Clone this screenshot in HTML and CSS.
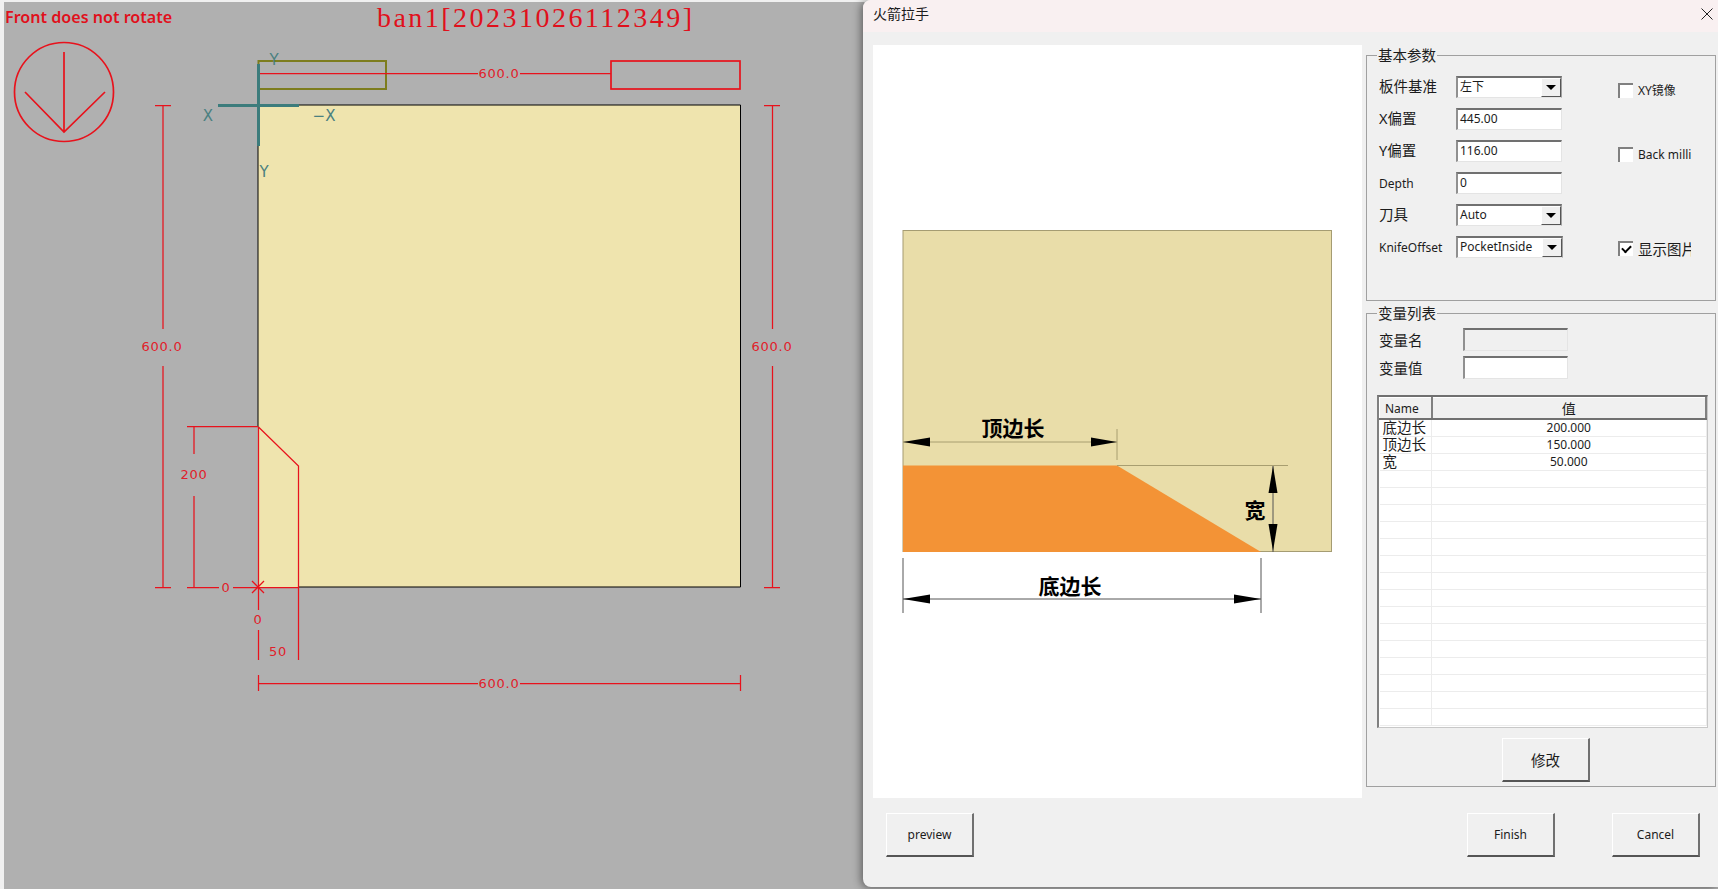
FILE: index.html
```html
<!DOCTYPE html>
<html lang="zh">
<head>
    <meta charset="UTF-8">
    <title>火箭拉手</title>
    <link rel="stylesheet" href="styles.css">
</head>
<body>
    <svg class="lienzo" width="1718" height="889" viewBox="0 0 1718 889">
        <rect class="fondo" x="4" y="2" width="1714" height="887"/>
        <polygon class="tablero" points="258,105 741,105 741,587 258,587"/>
        <polyline class="negro" points="258,427 258,105 740.5,105 740.5,587 298,587"/>
        <text class="aviso" x="5" y="23">Front does not rotate</text>
        <text class="titulo" x="377" y="27">ban1[20231026112349]</text>

        <circle class="rojo2" cx="64" cy="92" r="49.5"/>
        <path class="rojo2" d="M64 52V132M25 92L64 132L105 92"/>

        <rect class="oliva" x="258.5" y="61" width="127.5" height="28"/>
        <rect class="rojo2" x="611" y="61" width="129" height="28"/>
        <path class="rojo" d="M259 73.5H478M520 73.5H611"/>
        <text class="cota" x="499" y="78">600.0</text>

        <path class="rojo" d="M155 105.5H171M163 105.5V329M163 366V587M155 587.5H171"/>
        <text class="cota" x="162" y="351">600.0</text>
        <path class="rojo" d="M764 105.5H780M772.5 105.5V329M772.5 366V587M764 587.5H780"/>
        <text class="cota" x="772" y="351">600.0</text>
        <path class="rojo" d="M258.5 675V691M258.5 683.5H478M520 683.5H741M740.5 675V691"/>
        <text class="cota" x="499" y="688">600.0</text>

        <path class="rojo" d="M187 426.5H258M194 427V454M194 496V587M187 587.5H219M233 587.5H298"/>
        <path class="rojo" d="M258.5 427V610M258.5 630V660M258.5 427L298.5 466V660"/>
        <path class="rojo" d="M252 581L264 593M264 581L252 593"/>
        <text class="cota" x="194" y="479">200</text>
        <text class="cota" x="226" y="592">0</text>
        <text class="cota" x="258" y="624">0</text>
        <text class="cota" x="278" y="656">50</text>

        <path class="eje" d="M218 105.5H299M258.5 64V146"/>
        <text class="eje-txt" x="208" y="121">X</text>
        <text class="eje-txt" x="324" y="121">−X</text>
        <text class="eje-txt" x="274" y="65">Y</text>
        <text class="eje-txt" x="264" y="177">Y</text>
    </svg>

    <div class="dialogo">
        <div class="barra">
            <span class="barra-titulo">火箭拉手</span>
            <svg class="cerrar" width="12" height="12" viewBox="0 0 12 12"><path d="M0.5 0.5L11.5 11.5M11.5 0.5L0.5 11.5"/></svg>
        </div>

        <div class="cuerpo">
            <div class="vista">
                <svg width="489" height="753" viewBox="873 45 489 753">
                    <rect class="arena" x="903" y="230.5" width="428.5" height="321"/>
                    <polygon class="naranja" points="903,465.5 1117,465.5 1261,552 903,552"/>
                    <path class="fina" d="M1117 465.5H1288M1117 429V460M903 442H1117"/>
                    <path class="oscura" d="M903 558V613M1261 558V613M903 599H1261M1273 466V552"/>
                    <polygon points="903,442 930,437.5 930,446.5"/>
                    <polygon points="1117,442 1091,437.5 1091,446.5"/>
                    <polygon points="903,599 930,594.5 930,603.5"/>
                    <polygon points="1261,599 1234,594.5 1234,603.5"/>
                    <polygon points="1273,466 1268.5,493 1277.5,493"/>
                    <polygon points="1273,551 1268.5,524 1277.5,524"/>
                    <text class="rotulo" x="1013" y="436">顶边长</text>
                    <text class="rotulo" x="1070" y="594">底边长</text>
                    <text class="rotulo" x="1255" y="518">宽</text>
                </svg>
            </div>

            <div class="lateral">
                <fieldset class="grupo grupo-base">
                    <legend>基本参数</legend>
                    <div class="campos">
                        <label>板件基准</label>
                        <div class="combo"><span>左下</span><i></i></div>
                        <div class="check"><b></b><span>XY镜像</span></div>

                        <label>X偏置</label>
                        <div class="caja">445.00</div>
                        <div></div>

                        <label>Y偏置</label>
                        <div class="caja">116.00</div>
                        <div class="check"><b></b><span class="latin">Back milli</span></div>

                        <label class="latin">Depth</label>
                        <div class="caja">0</div>
                        <div></div>

                        <label>刀具</label>
                        <div class="combo"><span>Auto</span><i></i></div>
                        <div></div>

                        <label class="latin">KnifeOffset</label>
                        <div class="combo combo-ancho"><span>PocketInside</span><i></i></div>
                        <div class="check"><b class="marcado"></b><span class="cortado">显示图片</span></div>
                    </div>
                </fieldset>

                <fieldset class="grupo grupo-vars">
                    <legend>变量列表</legend>
                    <div class="var-fila"><label>变量名</label><div class="caja caja-off"></div></div>
                    <div class="var-fila"><label>变量值</label><div class="caja"></div></div>

                    <div class="tabla-marco">
                        <table class="tabla">
                            <thead><tr><th class="col-nombre">Name</th><th class="col-valor">值</th></tr></thead>
                            <tbody>
                                <tr><td>底边长</td><td>200.000</td></tr>
                                <tr><td>顶边长</td><td>150.000</td></tr>
                                <tr><td>宽</td><td>50.000</td></tr>
                                <tr><td></td><td></td></tr>
                                <tr><td></td><td></td></tr>
                                <tr><td></td><td></td></tr>
                                <tr><td></td><td></td></tr>
                                <tr><td></td><td></td></tr>
                                <tr><td></td><td></td></tr>
                                <tr><td></td><td></td></tr>
                                <tr><td></td><td></td></tr>
                                <tr><td></td><td></td></tr>
                                <tr><td></td><td></td></tr>
                                <tr><td></td><td></td></tr>
                                <tr><td></td><td></td></tr>
                                <tr><td></td><td></td></tr>
                                <tr><td></td><td></td></tr>
                                <tr><td></td><td></td></tr>
                            </tbody>
                        </table>
                    </div>
                    <button class="boton boton-modificar">修改</button>
                </fieldset>
            </div>
        </div>

        <div class="pie">
            <button class="boton">preview</button>
            <div class="pie-der">
                <button class="boton">Finish</button>
                <button class="boton">Cancel</button>
            </div>
        </div>
    </div>
</body>
</html>
```

FILE: styles.css
```css
* {
    box-sizing: border-box;
}
body {
    margin: 0;
    width: 1718px;
    height: 889px;
    overflow: hidden;
    position: relative;
    background-color: #f0f0f0;
    font-family: "Noto Sans", "Noto Sans CJK SC", sans-serif;
    font-size: 12px;
    color: #1c1c1c;
}

/* lienzo de la izquierda */
.lienzo {
    display: block;
    fill: none;
}
.fondo {
    fill: #b0b0b0;
}
.tablero {
    fill: #efe4ae;
}
.negro {
    fill: none;
    stroke: #000;
    stroke-width: 1;
}
.rojo {
    fill: none;
    stroke: #e8121c;
    stroke-width: 1.25;
}
.rojo2 {
    fill: none;
    stroke: #e8121c;
    stroke-width: 1.7;
}
.oliva {
    fill: none;
    stroke: #7d7d1e;
    stroke-width: 2;
}
.eje {
    fill: none;
    stroke: #3c7c7c;
    stroke-width: 3;
}
.eje-txt {
    fill: #4a8080;
    font-family: "DejaVu Sans", sans-serif;
    font-size: 15px;
    text-anchor: middle;
}
.aviso {
    fill: #e0101c;
    font-family: "Noto Sans", sans-serif;
    font-size: 16.1px;
    font-weight: 600;
}
.titulo {
    fill: #e0101c;
    font-family: "Liberation Serif", serif;
    font-size: 28px;
    letter-spacing: 2.47px;
}
.cota {
    fill: #e0202a;
    font-family: "DejaVu Sans", sans-serif;
    font-size: 13px;
    letter-spacing: 0.8px;
    text-anchor: middle;
}

/* dialogo */
.dialogo {
    position: absolute;
    left: 863px;
    top: 0;
    width: 855px;
    height: 887px;
    background-color: #f0f0f0;
    border-radius: 8px 0 0 8px;
    box-shadow: -2px 1px 8px rgba(0,0,0,0.45);
    display: flex;
    flex-direction: column;
    overflow: hidden;
}
.barra {
    height: 32px;
    background-color: #f9f0f1;
    padding: 0 5px 6px 10px;
    display: flex;
    align-items: center;
    justify-content: space-between;
}
.barra-titulo {
    font-size: 14px;
}
.cerrar {
    fill: none;
    stroke: #222;
    stroke-width: 1;
    margin-top: 2px;
}
.cuerpo {
    display: flex;
    padding: 13px 2px 0 10px;
    gap: 4px;
}
.vista {
    width: 489px;
    height: 753px;
    background-color: #fff;
}
.vista svg {
    display: block;
}
.arena {
    fill: #e9dda9;
    stroke: #a59c72;
    stroke-width: 1;
}
.naranja {
    fill: #f39336;
}
.fina {
    fill: none;
    stroke: #a89e70;
    stroke-width: 1;
}
.oscura {
    fill: none;
    stroke: #555;
    stroke-width: 1;
}
.rotulo {
    fill: #000;
    font-family: "Noto Sans CJK SC", sans-serif;
    font-size: 21px;
    font-weight: 700;
    text-anchor: middle;
}

.lateral {
    width: 350px;
    margin-top: 1px;
    display: flex;
    flex-direction: column;
    gap: 3px;
}
.grupo {
    margin: 0;
    min-width: 0;
    border: 1px solid #a0a0a0;
    padding: 0;
}
.grupo legend {
    margin-left: 10px;
    padding: 0 1px;
    font-size: 14.5px;
    line-height: 18px;
}
.grupo-base {
    height: 255px;
}
.grupo-vars {
    height: 483px;
}

.campos {
    display: grid;
    grid-template-columns: 77px 106px 1fr;
    grid-auto-rows: 22px;
    row-gap: 10px;
    padding: 12px 0 0 12px;
    align-items: center;
}
.campos label {
    padding-bottom: 4px;
}
.campos label,
.var-fila label {
    font-size: 14.5px;
    white-space: nowrap;
}
.campos .latin {
    font-size: 12px;
    padding-bottom: 0;
}
.caja {
    height: 22px;
    background-color: #fff;
    border-top: 2px solid #707070;
    border-left: 2px solid #909090;
    border-right: 1px solid #e4e4e4;
    border-bottom: 1px solid #e4e4e4;
    padding-left: 2px;
    line-height: 18px;
    font-size: 12px;
}
.caja-off {
    background-color: #f0f0f0;
}
.combo {
    height: 22px;
    background-color: #fff;
    border-top: 2px solid #707070;
    border-left: 2px solid #909090;
    border-right: 1px solid #a0a0a0;
    border-bottom: 1px solid #e4e4e4;
    padding-left: 2px;
    display: flex;
    justify-content: space-between;
    line-height: 18px;
}
.combo-ancho {
    width: 107px;
}
.combo i {
    width: 20px;
    height: 19px;
    background-color: #f0f0f0;
    border: 1px solid;
    border-color: #fff #555 #555 #fff;
    position: relative;
}
.combo i::after {
    content: "";
    position: absolute;
    left: 4px;
    top: 6px;
    border-left: 5px solid transparent;
    border-right: 5px solid transparent;
    border-top: 5px solid #000;
}
.check {
    align-self: end;
    margin: 0 0 -1px 56px;
    display: flex;
    align-items: center;
    gap: 5px;
}
.check b {
    width: 15px;
    height: 15px;
    flex: none;
    background-color: #fff;
    border-top: 2px solid #808080;
    border-left: 2px solid #808080;
    position: relative;
}
.check .marcado::after {
    content: "";
    position: absolute;
    left: 2px;
    top: 2px;
    width: 7px;
    height: 4px;
    border-left: 2px solid #000;
    border-bottom: 2px solid #000;
    transform: rotate(-45deg);
}
.check span {
    white-space: nowrap;
}
.check .cortado {
    font-size: 14.5px;
    width: 53px;
    overflow: hidden;
}

.var-fila {
    display: flex;
    align-items: center;
    padding-left: 12px;
    height: 23px;
}
.var-fila label {
    width: 84px;
}
.var-fila .caja {
    width: 105px;
    height: 23px;
}
.var-fila:nth-of-type(1) {
    margin-top: 6px;
}
.var-fila + .var-fila {
    margin-top: 5px;
}
.tabla-marco {
    margin: 16px 0 0 10px;
    width: 331px;
    height: 333px;
    background-color: #fff;
    border-top: 2px solid #707070;
    border-left: 2px solid #808080;
    border-right: 1px solid #c8c8c8;
    border-bottom: 1px solid #c8c8c8;
    overflow: hidden;
}
.tabla {
    width: 100%;
    border-collapse: collapse;
    table-layout: fixed;
}
.tabla th {
    height: 20px;
    padding: 0;
    background-color: #f0f0f0;
    border-top: 1px solid #fff;
    border-left: 1px solid #fff;
    border-right: 2px solid #808080;
    border-bottom: 2px solid #707070;
    font-weight: 400;
}
.col-nombre {
    width: 52px;
    font-size: 12px;
    text-align: left;
    padding-left: 5px !important;
}
.col-valor {
    font-size: 14px;
}
.tabla td {
    height: 17px;
    padding: 0;
    border-bottom: 1px solid #ececec;
    border-right: 1px solid #ececec;
    text-align: center;
    vertical-align: top;
    line-height: 15px;
    white-space: nowrap;
}
.tabla td:first-child {
    text-align: left;
    padding-left: 3px;
    font-size: 14.5px;
}

.boton {
    display: block;
    width: 88px;
    height: 44px;
    padding: 0;
    background-color: #f0f0f0;
    border: 1px solid;
    border-color: #fff #707070 #555 #fff;
    border-width: 1px 2px 2px 1px;
    color: #1c1c1c;
    font-family: "Noto Sans", "Noto Sans CJK SC", sans-serif;
    font-size: 12px;
}
.boton-modificar {
    margin: 10px 0 0 135px;
    font-size: 14.5px;
}
.pie {
    display: flex;
    justify-content: space-between;
    padding: 15px 18px 0 23px;
}
.pie-der {
    display: flex;
    gap: 57px;
}
```
